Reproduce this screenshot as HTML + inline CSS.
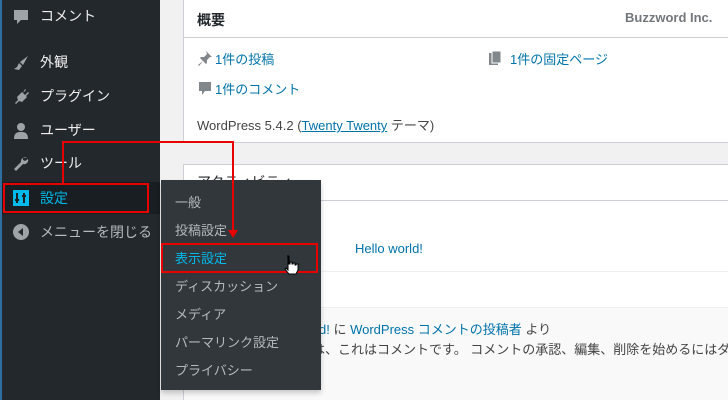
<!DOCTYPE html>
<html><head><meta charset="utf-8"><style>
*{margin:0;padding:0;box-sizing:border-box}
html,body{width:728px;height:400px;overflow:hidden}
body{background:#f1f1f1;font-family:"Liberation Sans","Noto Sans CJK JP",sans-serif;position:relative}
.abs{position:absolute;white-space:nowrap}
#side{position:absolute;left:0;top:0;width:160px;height:400px;background:#23282d;border-left:2px solid #2f6f9f}
.si{position:absolute;left:38px;font-size:14px;color:#eee}
.ic{position:absolute;left:10px;width:18px;height:18px}
.card{position:absolute;background:#fff;border:1px solid #ccd0d4;border-right:none}
a{color:#0073aa;text-decoration:none}
#fly{position:absolute;left:161px;top:180px;width:160px;height:210px;background:#32373c;box-shadow:0 3px 5px rgba(0,0,0,.2)}
.fi{position:absolute;left:14px;font-size:13px;color:#b4b9be}
.red{position:absolute;border:2px solid #e60000}
#clip{position:absolute;left:0;top:0;width:728px;height:400px;overflow:hidden}
</style></head><body><div id="clip">
<div class="card" style="left:183px;top:-1px;width:545px;height:144px">
 <div style="height:38px;border-bottom:1px solid #ccd0d4"></div>
</div>
<div class="abs" style="left:197px;top:10px;font-size:14px;font-weight:bold;color:#23282d">概要</div>
<div class="abs" style="left:625px;top:10px;font-size:13px;font-weight:bold;color:#72777c">Buzzword Inc.</div>
<svg class="abs" style="left:197px;top:50px" width="16" height="16" viewBox="0 0 16 16"><path d="M9 1l6 6-2 0-3 3 0 3-1 1-3-3-4 5-1-1 5-4-3-3 1-1 3 0 3-3z" fill="#82878c"/></svg>
<div class="abs" style="left:215px;top:49px;font-size:13px"><a>1件の投稿</a></div>
<svg class="abs" style="left:487px;top:50px" width="16" height="16" viewBox="0 0 16 16"><rect x="2" y="3" width="9" height="12" fill="#82878c"/><rect x="5" y="1" width="9" height="12" fill="#82878c" stroke="#fff"/></svg>
<div class="abs" style="left:510px;top:49px;font-size:13px"><a>1件の固定ページ</a></div>
<svg class="abs" style="left:197px;top:80px" width="16" height="16" viewBox="0 0 16 16"><path d="M2 2h12v9H8l-3 4v-4H2z" fill="#82878c"/></svg>
<div class="abs" style="left:215px;top:79px;font-size:13px"><a>1件のコメント</a></div>
<div class="abs" style="left:197px;top:115px;font-size:13px;color:#444">WordPress 5.4.2 (<a style="text-decoration:underline">Twenty Twenty</a> テーマ)</div>
<div class="card" style="left:183px;top:164px;width:545px;height:236px;border-bottom:none">
 <div style="height:36px;border-bottom:1px solid #ccd0d4"></div>
 <div style="position:absolute;top:106px;left:0;right:0;border-top:1px solid #eee"></div>
 <div style="position:absolute;top:142px;left:0;right:0;bottom:0;background:#f9f9f9;border-top:1px solid #eee"></div>
</div>
<div class="abs" style="left:197px;top:172px;font-size:14px;color:#23282d">アクティビティ</div>
<div class="abs" style="left:355px;top:241px;font-size:13px"><a>Hello world!</a></div>
<div class="abs" style="left:319px;top:319px;font-size:13px;color:#444"><a>d!</a> に <a>WordPress コメントの投稿者</a> より</div>
<div class="abs" style="left:260px;top:339px;font-size:13px;color:#444">こんにちは、これはコメントです。 コメントの承認、編集、削除を始めるにはダッシュボード</div>

<div id="side">
 <svg class="ic" style="top:8px" viewBox="0 0 18 18"><path d="M2 2h14v10H9l-4 4v-4H2z" fill="#9ea3a8"/></svg>
 <div class="si" style="top:6px">コメント</div>
 <svg class="ic" style="top:54px" viewBox="0 0 18 18"><path d="M16 2l-5 9-3-3zM7 9l3 3-3 4-5-1 3-2z" fill="#9ea3a8"/></svg>
 <div class="si" style="top:52px">外観</div>
 <svg class="ic" style="top:88px" viewBox="0 0 18 18"><path d="M13 1l1 1-3 3 2 2 3-3 1 1-3 3 1 1-5 5-3-1-3 3-1-1 3-3-1-3 5-5 1 1z" fill="#9ea3a8"/></svg>
 <div class="si" style="top:86px">プラグイン</div>
 <svg class="ic" style="top:122px" viewBox="0 0 18 18"><circle cx="9" cy="5" r="4" fill="#9ea3a8"/><path d="M2 17c0-6 3-7 7-7s7 1 7 7z" fill="#9ea3a8"/></svg>
 <div class="si" style="top:120px">ユーザー</div>
 <svg class="ic" style="top:155px" viewBox="0 0 18 18"><path d="M15 3a4 4 0 0 0-6 4L2 14l2 2 7-7a4 4 0 0 0 5-5l-3 2-2-1 0-2z" fill="#9ea3a8"/></svg>
 <div class="si" style="top:153px">ツール</div>
 <div style="position:absolute;left:0;top:182px;width:158px;height:32px;background:#191e23"></div>
 <svg class="ic" style="top:189px" viewBox="0 0 18 18"><rect x="1" y="1" width="16" height="16" fill="#00b9eb"/><path d="M5 4v10M12 4v10M3 11h4M10 7h4" stroke="#191e23" stroke-width="2"/></svg>
 <div class="si" style="top:188px;color:#00b9eb">設定</div>
 <svg class="ic" style="top:223px" viewBox="0 0 18 18"><circle cx="9" cy="9" r="8" fill="#9ea3a8"/><path d="M11 5v8L6 9z" fill="#23282d"/></svg>
 <div class="si" style="top:222px;color:#b4b9be">メニューを閉じる</div>
</div>
<div style="position:absolute;left:153px;top:191px;width:0;height:0;border:8px solid transparent;border-right-color:#32373c"></div>
<div id="fly">
 <div class="fi" style="top:12px">一般</div>
 <div class="fi" style="top:40px">投稿設定</div>
 <div class="fi" style="top:68px;color:#00b9eb">表示設定</div>
 <div class="fi" style="top:96px">ディスカッション</div>
 <div class="fi" style="top:124px">メディア</div>
 <div class="fi" style="top:152px">パーマリンク設定</div>
 <div class="fi" style="top:180px">プライバシー</div>
</div>
<div class="red" style="left:3px;top:183px;width:146px;height:30px"></div>
<div class="red" style="left:161px;top:243px;width:157px;height:30px"></div>
<div style="position:absolute;left:62px;top:141px;width:2px;height:42px;background:#e60000"></div>
<div style="position:absolute;left:62px;top:141px;width:172px;height:2px;background:#e60000"></div>
<div style="position:absolute;left:232px;top:141px;width:2px;height:90px;background:#e60000"></div>
<div style="position:absolute;left:228px;top:230px;width:0;height:0;border-left:5px solid transparent;border-right:5px solid transparent;border-top:8px solid #e60000"></div>
<svg class="abs" style="left:283px;top:255px" width="16" height="20" viewBox="0 0 16 20"><path d="M4 1h2v8h1V7h2v2h1V8h2v2h1V9h2v6l-2 4H6l-4-5 1-1 2 2V1z" fill="#fff" stroke="#000" stroke-width="1"/></svg>
</div></body></html>
